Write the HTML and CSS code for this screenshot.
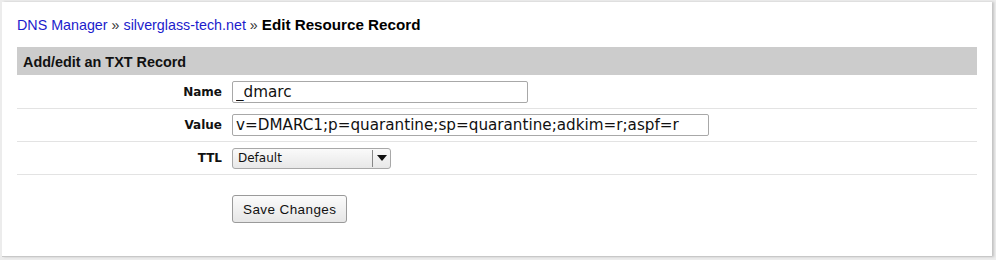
FILE: index.html
```html
<!DOCTYPE html>
<html lang="en">
<head>
    <meta charset="UTF-8">
    <title>Edit Resource Record</title>
    <link rel="stylesheet" href="styles.css">
</head>
<body>
    <div class="page">
        <div class="crumbs">
            <a href="#">DNS Manager</a> &raquo; <a href="#">silverglass-tech.net</a> &raquo; <b>Edit Resource Record</b>
        </div>

        <form class="record-form">
            <table class="form-table">
                <tr>
                    <th colspan="2" class="form-head">Add/edit an TXT Record</th>
                </tr>
                <tr class="first">
                    <td class="label">Name</td>
                    <td><input type="text" class="field name-field" value="_dmarc"></td>
                </tr>
                <tr>
                    <td class="label">Value</td>
                    <td><input type="text" class="field value-field" value="v=DMARC1;p=quarantine;sp=quarantine;adkim=r;aspf=r"></td>
                </tr>
                <tr>
                    <td class="label">TTL</td>
                    <td>
                        <div class="select">
                            <span class="select-text">Default</span>
                            <span class="select-arrow"></span>
                        </div>
                    </td>
                </tr>
                <tr class="actions">
                    <td></td>
                    <td><button type="button" class="btn">Save Changes</button></td>
                </tr>
            </table>
        </form>
    </div>
</body>
</html>
```

FILE: styles.css
```css
html {
    background: #ececec;
}
body {
    margin: 0;
    padding: 2px 4px 3px 2px;
    font-family: "Liberation Sans", Arial, sans-serif;
    font-size: 14px;
    color: #000;
}
.page {
    background: #fff;
    height: 255px;
    box-sizing: border-box;
    padding: 15px 15px 0 15px;
    border-bottom: 1px solid #c8c8c8;
    box-shadow: 2px 0 2px #c4c4c4;
}
.crumbs {
    height: 30px;
    line-height: 16px;
    font-size: 14.3px;
    color: #333;
}
.crumbs a {
    color: #1c1ccc;
    text-decoration: none;
}
.crumbs b {
    color: #000;
    font-size: 15.2px;
}
.form-table {
    width: 960px;
    border-collapse: collapse;
}
.form-head {
    background: #cccccc;
    text-align: left;
    font-size: 14.4px;
    font-weight: bold;
    height: 27px;
    padding: 1px 6px 0;
    color: #111;
}
.form-table td {
    border-bottom: 1px solid #e3e3e3;
    height: 32px;
    padding: 0;
    vertical-align: middle;
}
.first td {
    height: 33px;
}
.label {
    width: 205px;
    text-align: right;
    padding-right: 10px !important;
    font-family: "DejaVu Sans", sans-serif;
    font-weight: bold;
    font-size: 12px;
    color: #111;
}
.field {
    box-sizing: border-box;
    height: 22px;
    border: 1px solid #a8a8a8;
    border-radius: 2px;
    padding: 0 3px;
    margin: 0;
    font-family: "DejaVu Sans", sans-serif;
    font-size: 15.2px;
    color: #111;
}
.name-field {
    width: 296px;
}
.value-field {
    width: 477px;
}
.select {
    box-sizing: border-box;
    display: flex;
    align-items: center;
    width: 159px;
    height: 21px;
    border: 1px solid #a8a8a8;
    border-radius: 3px;
    background: linear-gradient(#fafafa, #e8e8e8);
    font-family: "DejaVu Sans", sans-serif;
    font-size: 12px;
    color: #111;
}
.select-text {
    flex: 1;
    padding-left: 5px;
}
.select-arrow {
    width: 17px;
    height: 17px;
    border-left: 1px solid #888;
    display: flex;
    align-items: center;
    justify-content: center;
}
.select-arrow::after {
    content: "";
    border-left: 5px solid transparent;
    border-right: 5px solid transparent;
    border-top: 6px solid #111;
}
.actions td {
    border-bottom: none;
    height: 70px;
    vertical-align: top;
    padding-top: 20px;
}
.btn {
    font-family: "Liberation Sans", Arial, sans-serif;
    font-size: 13.5px;
    height: 28px;
    padding: 0 10px;
    border: 1px solid #9a9a9a;
    border-radius: 3px;
    background: linear-gradient(#fbfbfb, #e6e6e6);
    color: #111;
    letter-spacing: 0.4px;
}
```
